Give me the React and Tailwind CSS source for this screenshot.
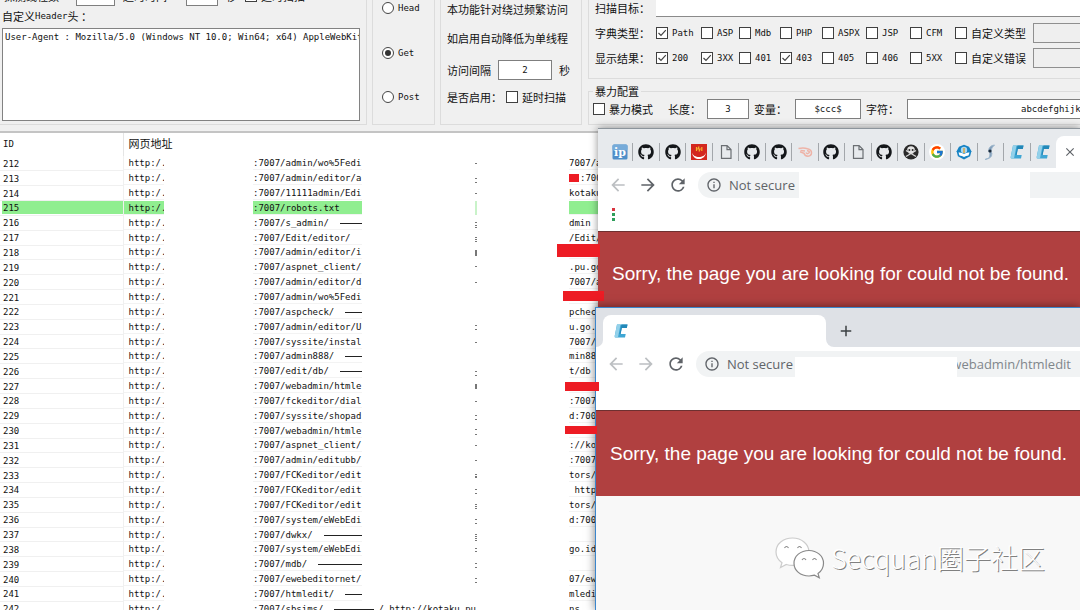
import React from "react";
import { FaGithub } from "react-icons/fa";
import { FcGoogle } from "react-icons/fc";
import { MdArrowBack, MdArrowForward, MdRefresh, MdOutlineInfo, MdClose, MdAdd } from "react-icons/md";

const MONO = "font-['DejaVu_Sans_Mono','Noto_Sans_CJK_SC',monospace] text-[9px]";

// [id, path, rule after path, residue pixels, right fragment]
const ROWS = [
  [212, ":7007/admin/wo%5Fedi", false, [7], "7007/a"],
  [213, ":7007/admin/editor/a", false, [7, 11], "", ":700"],
  [214, ":7007/11111admin/Edi", false, [7], "kotaku"],
  [215, ":7007/robots.txt", false, [], ""],
  [216, ":7007/s_admin/", true, [6, 9, 11], "dmin"],
  [217, ":7007/Edit/editor/", false, [6, 8, 10], "/Edit/"],
  [218, ":7007/admin/editor/i", false, [5, 6, 7, 8, 9, 10], ""],
  [219, ":7007/aspnet_client/", false, [6], ".pu.go"],
  [220, ":7007/admin/editor/d", false, [7], "7007/a"],
  [221, ":7007/admin/wo%5Fedi", false, [], ""],
  [222, ":7007/aspcheck/", true, [], "pcheck"],
  [223, ":7007/admin/editor/U", false, [5, 9], "u.go."],
  [224, ":7007/syssite/instal", false, [7], "7007/"],
  [225, ":7007/admin888/", true, [], "min88"],
  [226, ":7007/edit/db/", true, [7, 11], "t/db"],
  [227, ":7007/webadmin/htmle", false, [5, 6, 7, 8, 9], ""],
  [228, ":7007/fckeditor/dial", false, [7], ":7007"],
  [229, ":7007/syssite/shopad", false, [6, 10], "d:700"],
  [230, ":7007/webadmin/htmle", false, [5, 10], ""],
  [231, ":7007/aspnet_client/", false, [7], "://ko"],
  [232, ":7007/admin/editubb/", false, [7], ":7007"],
  [233, ":7007/FCKeditor/edit", false, [6, 8, 9], "tors/"],
  [234, ":7007/FCKeditor/edit", false, [6, 10], " http"],
  [235, ":7007/FCKeditor/edit", false, [6, 8, 10], "tors/"],
  [236, ":7007/system/eWebEdi", false, [6, 10], "d:700"],
  [237, ":7007/dwkx/", true, [6, 8, 10, 12], ""],
  [238, ":7007/system/eWebEdi", false, [6, 9], "go.id"],
  [239, ":7007/mdb/", true, [6, 10], ""],
  [240, ":7007/ewebeditornet/", false, [6, 10], "07/ew"],
  [241, ":7007/htmledit/", true, [], "mledi"],
  [242, ":7007/sbsims/", true, [], "ns"],
];

function Box({ id, checked, label }) {
  return (
    <span className="flex items-center gap-1 whitespace-nowrap">
      <span className="relative flex h-3 w-3 shrink-0">
        <input
          id={id}
          type="checkbox"
          defaultChecked={checked}
          className="peer h-3 w-3 appearance-none border border-[#404040] bg-white"
        />
        <svg
          viewBox="0 0 12 12"
          className="pointer-events-none absolute inset-0 hidden h-3 w-3 peer-checked:block"
          fill="none"
          stroke="#444"
          strokeWidth="1.2"
        >
          <path d="M2.5 6 L5 8.5 L9.8 3.2" />
        </svg>
      </span>
      <label htmlFor={id}>{label}</label>
    </span>
  );
}

function RadioItem({ id, checked, label }) {
  return (
    <span className="flex h-4 items-center gap-1">
      <span className="relative flex h-3 w-3 shrink-0">
        <input
          id={id}
          name="method"
          type="radio"
          defaultChecked={checked}
          className="peer h-3 w-3 appearance-none rounded-full border border-[#444] bg-white"
        />
        <span className="pointer-events-none absolute inset-[3px] hidden rounded-full bg-[#333] peer-checked:block" />
      </span>
      <label htmlFor={id} className={MONO}>
        {label}
      </label>
    </span>
  );
}

const FIELD = "border border-[#7f7f7f] bg-white text-center";

function TopLeft() {
  return (
    <div className="w-[367px] shrink-0 border-r border-b border-[#dcdcdc] pl-[2px]">
      <div className="-mt-[14px] flex h-5 items-center whitespace-nowrap">
        <label htmlFor="threads" className="w-[74px] pl-[2px]">探测线程数</label>
        <input id="threads" className={"h-5 w-[39px] " + FIELD} />
        <label htmlFor="timeout" className="w-[71px] pl-2">超时时间</label>
        <input id="timeout" className={"h-5 w-8 " + FIELD} />
        <span className="w-[27px] pl-2">秒</span>
        <Box id="follow" label="延时扫描" />
      </div>
      <label htmlFor="headers" className="flex h-5 items-center">
        自定义<span className={MONO}>Header</span>头 ：
      </label>
      <textarea
        id="headers"
        wrap="off"
        defaultValue="User-Agent : Mozilla/5.0 (Windows NT 10.0; Win64; x64) AppleWebKit/537.36"
        className={"mt-[2px] block h-[93px] w-[358px] resize-none overflow-hidden border border-[#828282] bg-white px-[2px] pt-[2px] leading-3 " + MONO}
      />
    </div>
  );
}

function DelayGroup() {
  return (
    <div className="ml-[5px] w-[142px] shrink-0 border-x border-b border-[#dcdcdc] pl-[6px]">
      <p className="flex h-[18px] items-center">本功能针对绕过频繁访问</p>
      <p className="flex h-10 items-center">如启用自动降低为单线程</p>
      <div className="flex h-6 items-center">
        <label htmlFor="gap" className="w-[51px]">访问间隔</label>
        <input id="gap" defaultValue="2" className={"h-5 w-[54px] " + MONO + " " + FIELD} />
        <span className="pl-[7px]">秒</span>
      </div>
      <div className="flex h-[30px] items-center">
        <span className="w-[59px]">是否启用：</span>
        <Box id="delay" label="延时扫描" />
      </div>
    </div>
  );
}

const TYPES = [["Path", 1], ["ASP"], ["Mdb"], ["PHP"], ["ASPX"], ["JSP"], ["CFM"]];
const CODES = [["200", 1], ["3XX", 1], ["401"], ["403", 1], ["405"], ["406"], ["5XX"]];
const COLS = "grid h-[25px] grid-cols-[61px_45px_38px_41px_42px_44px_44px_45px_78px_minmax(0,1fr)] items-center";

function OptionRow({ title, items, custom, id }) {
  return (
    <div className={COLS}>
      <span>{title}</span>
      {items.map(([t, c]) => (
        <span key={t} className={MONO}>
          <Box id={id + t} label={t} checked={!!c} />
        </span>
      ))}
      <Box id={id + "custom"} label={custom} />
      <input aria-label={custom} disabled className="h-5 w-full border border-r-0 border-[#8f8f8f] bg-[#efefef]" />
    </div>
  );
}

function RightGroups() {
  return (
    <div className="ml-[6px] min-w-0 flex-1">
      <div className="h-[79px] border-b border-l border-[#dcdcdc] pl-[6px]">
        <div className="flex h-5 items-start">
          <label htmlFor="target" className="w-[61px]">扫描目标：</label>
          <input id="target" className="h-[17px] flex-1 border-b border-[#8a8a8a] bg-white" />
        </div>
        <OptionRow title="字典类型：" items={TYPES} custom="自定义类型" id="t" />
        <OptionRow title="显示结果：" items={CODES} custom="自定义错误" id="c" />
      </div>
      <fieldset className="mt-1 h-[42px] border-b border-l border-t border-[#dcdcdc] pl-1">
        <legend className="px-[2px] leading-4">暴力配置</legend>
        <div className="flex h-5 items-center whitespace-nowrap">
          <span className="w-[75px]"><Box id="brute" label="暴力模式" /></span>
          <label htmlFor="len" className="w-[39px]">长度：</label>
          <input id="len" defaultValue="3" className={"h-5 w-[42px] " + MONO + " " + FIELD} />
          <label htmlFor="var" className="w-[46px] pl-[5px]">变量：</label>
          <input id="var" defaultValue="$ccc$" className={"h-5 w-[66px] " + MONO + " " + FIELD} />
          <label htmlFor="chars" className="w-[46px] pl-[5px]">字符：</label>
          <input
            id="chars"
            defaultValue="abcdefghijklmnopqrstuvwxyz"
            className={"h-5 min-w-0 flex-1 border border-r-0 border-[#7f7f7f] bg-white pl-[113px] " + MONO}
          />
        </div>
      </fieldset>
    </div>
  );
}

function Results() {
  return (
    <table className={"h-[484px] w-full table-fixed border-collapse leading-[11px] whitespace-pre " + MONO}>
      <colgroup>
        <col className="w-[123px]" />
        <col className="w-[130px]" />
        <col className="w-[222px]" />
        <col className="w-[94px]" />
        <col />
      </colgroup>
      <thead>
        <tr className="h-[23px] text-left">
          <th className="border-r border-[#e5e5e5] p-0 pl-[3px] font-normal">ID</th>
          <th colSpan={4} className="p-0 pl-[5px] text-[11px] font-normal">网页地址</th>
        </tr>
      </thead>
      <tbody>
        {ROWS.map(([id, path, rule, marks, frag, late]) => {
          const hit = id === 215;
          const tone = hit ? "bg-[#90ee90] " : "";
          return (
            <tr key={id}>
              <td className="border-r border-b border-[#f0f0f0] p-0 pl-[2px]">
                <div className={tone + "pt-[2px] pl-px"}>{id}</div>
              </td>
              <td className="p-0">
                <div className={tone + "w-10 overflow-hidden border-b border-[#f3f3f3] pt-[2px] pl-[5px]"}>http:/.</div>
              </td>
              <td className="p-0">
                <div className={tone + "flex items-center border-b border-[#f3f3f3] pt-[2px] " + (id === 242 ? "w-[223px]" : "w-[109px] overflow-hidden")}>
                  {path}
                  {rule && <span className={"ml-[11px] h-px bg-[#222] " + (id === 242 ? "w-[44px]" : "flex-1")} />}
                  {id === 242 && <span className="pl-1">/ http://kotaku.pu</span>}
                </div>
              </td>
              <td className="p-0">
                <svg width="2" height="14" className="block">
                  {hit && <rect width="2" height="14" fill="#c9f3c9" />}
                  {marks.map((y) => (
                    <rect key={y} y={y} width="2" height="1" fill="#777" />
                  ))}
                </svg>
              </td>
              <td className="p-0">
                <div className={tone + "h-[14px] w-[31px] overflow-hidden border-b border-[#f3f3f3] pt-[2px]"}>
                  {late ? <span className="pl-[11px]">{late}</span> : frag}
                </div>
              </td>
            </tr>
          );
        })}
      </tbody>
    </table>
  );
}

function PageGlyph() {
  return (
    <svg viewBox="0 0 16 16" className="h-4 w-4" fill="none" stroke="#6b6f73" strokeWidth="1.2">
      <path d="M3.5 1.6h5.6L13 5.5v8.9H3.5z M9 1.6v4h4" />
    </svg>
  );
}

function IpGlyph() {
  return (
    <svg viewBox="0 0 16 16" className="h-4 w-4">
      <rect x=".5" y=".5" width="15" height="15" rx="1.5" fill="#4f8fc9" />
      <rect x=".5" y=".5" width="15" height="6" rx="1.5" fill="#76abd9" />
      <text x="8" y="11.5" fontSize="11" fontWeight="bold" fontFamily="DejaVu Serif" textAnchor="middle" fill="#fff">ip</text>
    </svg>
  );
}

function RedGlyph() {
  return (
    <svg viewBox="0 0 16 16" className="h-4 w-4">
      <rect width="16" height="16" fill="#d3281f" />
      <path d="M1 8.500c1.500 6 12.500 6 14 0-1 8.500-13 9-14 0z" fill="#fff" />
      <path d="M5.500 3v4M8 2.500l-1 2.500h2l-1 2.500M10.800 3v4" stroke="#f6b52c" strokeWidth="1.200" fill="none" />
    </svg>
  );
}

function SwirlGlyph() {
  return (
    <svg viewBox="0 0 16 16" className="h-4 w-4" fill="none" stroke="#eeb3a7" strokeWidth="1.500">
      <path d="M1.500 4.500q5-1 9 .2 4 1 4 4t-3.500 3.500q-3.500 0-4-3l-4-1.500" />
      <path d="M3.500 6.500l4.500.5M9 8.500q1 2 2.800.5T10 6.500" />
    </svg>
  );
}

function SkullGlyph() {
  return (
    <svg viewBox="0 0 16 16" className="h-4 w-4">
      <circle cx="8" cy="8" r="7.600" fill="#2a2a2a" />
      <path d="M3 6.500l10 6M13 6.500l-10 6" stroke="#d8d8d8" strokeWidth="1.300" />
      <path d="M8 2.200c-2.500 0-3.800 1.500-3.800 3.400 0 1.200.7 2 1.500 2.400v1.600h4.600V8c.8-.4 1.500-1.200 1.500-2.400 0-1.900-1.300-3.400-3.800-3.400z" fill="#e4e4e4" />
      <circle cx="6.400" cy="5.900" r="1" fill="#2a2a2a" />
      <circle cx="9.600" cy="5.900" r="1" fill="#2a2a2a" />
    </svg>
  );
}

function CrestGlyph() {
  return (
    <svg viewBox="0 0 16 16" className="h-4 w-4">
      <path d="M8 .7l5 2 2.400 4.500-1.300 5L8 15.400l-6.100-3.200-1.300-5L3 2.700z" fill="#1683c4" />
      <circle cx="8" cy="6" r="3.200" fill="#a9d8f2" />
      <path d="M2.500 8.500q3-.5 5.500 1.500 2.500-2 5.500-1.500l-1 3q-2.500 0-4.500 1.500-2-1.500-4.500-1.500z" fill="#fff" />
      <path d="M8 4v5" stroke="#d9a441" strokeWidth="1.500" />
    </svg>
  );
}

function BoltGlyph() {
  return (
    <svg viewBox="0 0 16 16" className="h-4 w-4">
      <path d="M12.500 1Q7 1.500 6.500 7q2.500 2 .5 7l-4 1.500q5-.5 6.500-3.500 1-3-.5-4.500.2-4 3.500-6.500z" fill="#7f9cb8" stroke="#9fb7cc" />
      <circle cx="8" cy="7" r="1.600" fill="#1d2b3a" />
    </svg>
  );
}

function CGlyph() {
  return (
    <svg viewBox="0 0 16 16" className="h-4 w-4">
      <path d="M4 1.500h10.500L13.800 5H8.800L7.600 11h5.100L12 14.500H3Q1.300 14.500 1.700 13z" fill="#3fa6d4" />
      <path d="M4 1.500h3.500L5 14.500H3Q1.300 14.500 1.700 13z" fill="#93d1ea" />
      <path d="M8.500 1.500h6L13.800 5H8.800L7.600 11H6.500z" fill="#2388b8" />
    </svg>
  );
}

const Git = () => <FaGithub className="h-4 w-4 text-[#14171a]" />;
const Goo = () => (
  <span className="flex rounded-full bg-white p-px">
    <FcGoogle className="h-[14px] w-[14px]" />
  </span>
);
const TABS = [IpGlyph, Git, Git, RedGlyph, PageGlyph, Git, Git, SwirlGlyph, Git, PageGlyph, Git, SkullGlyph, Goo, CrestGlyph, BoltGlyph, CGlyph, CGlyph];

function NavButtons({ forward }) {
  return (
    <div className="flex w-[92px] shrink-0 items-center gap-[10px]">
      <button aria-label="Back"><MdArrowBack className="h-5 w-5 text-[#bcbfc2]" /></button>
      <button aria-label="Forward"><MdArrowForward className={"h-5 w-5 " + (forward ? "text-[#5f6368]" : "text-[#bcbfc2]")} /></button>
      <button aria-label="Reload"><MdRefresh className="h-5 w-5 text-[#5f6368]" /></button>
    </div>
  );
}

function Sorry({ className }) {
  return (
    <div className={"flex items-center overflow-hidden bg-[#b04040] font-['Liberation_Sans',sans-serif] text-[19px] whitespace-nowrap text-white " + className}>
      Sorry, the page you are looking for could not be found.
    </div>
  );
}

const URLTEXT = "font-['Open_Sans',sans-serif] text-[13px]";

function BackWindow() {
  return (
    <section className="absolute top-[128px] right-0 left-[598px] border-t border-[#8d959c] bg-white shadow-[0_0_8px_rgba(0,0,0,0.45)]">
      <div className="flex h-[39px] items-end bg-[#e7eaed] pl-[9px]">
        <ul className="flex h-8 flex-1 items-center">
          {TABS.map((Glyph, i) => (
            <li key={i} className={"flex h-[18px] flex-1 items-center justify-center " + (i < 16 ? "border-r border-[#a3a7ab]" : "")}>
              <Glyph />
            </li>
          ))}
        </ul>
        <button aria-label="Close tab" className="flex h-8 w-6 items-center justify-center rounded-tl-lg bg-white pl-1">
          <MdClose className="h-[14px] w-[14px] text-[#5f6368]" />
        </button>
      </div>
      <div className="flex h-[33px] items-center pl-[10px]">
        <NavButtons forward />
        <div className="ml-[-2px] flex h-[26px] flex-1 items-center">
          <div className={"flex h-full w-[101px] items-center gap-[7px] rounded-l-full bg-[#f1f3f4] pl-2 whitespace-nowrap text-[#5f6368] " + URLTEXT}>
            <MdOutlineInfo className="h-4 w-4 shrink-0" /> Not secure
          </div>
          <div className="ml-[231px] h-full flex-1 bg-[#f1f3f4]" />
        </div>
      </div>
      <div className="flex h-[30px] flex-col gap-[2px] pt-[7px] pl-[14px]">
        <span className="h-[3px] w-[3px] bg-[#d9333f]" />
        <span className="h-[3px] w-[3px] bg-[#2f9e5b]" />
        <span className="h-[3px] w-[3px] bg-[#2f9e5b]" />
      </div>
      <Sorry className="h-[85px] border-t border-[#6e3030] pl-[14px]" />
    </section>
  );
}

function FrontWindow() {
  return (
    <section className="absolute top-[307px] right-0 bottom-0 left-[595px] border-t border-l border-[#3b86cc] bg-[#f8f8f8] shadow-[0_0_9px_rgba(0,0,0,0.5)]">
      <div className="flex h-[39px] items-end bg-[#dee1e6]">
        <div className="h-full w-[7px] pt-[30px]">
          <div className="h-[9px] bg-white"><div className="h-full rounded-br-lg bg-[#dee1e6]" /></div>
        </div>
        <div className="flex h-8 w-[223px] items-center rounded-t-lg bg-white pl-[10px]">
          <CGlyph />
        </div>
        <div className="h-2 w-2 bg-white"><div className="h-full rounded-bl-lg bg-[#dee1e6]" /></div>
        <button aria-label="New tab" className="flex h-8 items-center pl-[3px]">
          <MdAdd className="h-[18px] w-[18px] text-[#3c4043]" />
        </button>
      </div>
      <div className="flex h-[33px] items-center bg-white pl-[10px]">
        <NavButtons />
        <div className={"ml-[-2px] flex h-[26px] flex-1 items-end overflow-hidden rounded-l-full bg-[#f1f3f4] whitespace-nowrap " + URLTEXT}>
          <div className="flex h-full w-[99px] items-center gap-[7px] pl-2 text-[#5f6368]">
            <MdOutlineInfo className="h-4 w-4 shrink-0" /> Not secure
          </div>
          <div className="h-5 w-[162px] bg-white" />
          <div className="flex h-full min-w-0 flex-1 items-center justify-end overflow-hidden pr-[9px] text-[#80868b]">
            webadmin/htmledit
          </div>
        </div>
      </div>
      <div className="h-[30px] bg-white" />
      <Sorry className="h-[86px] border-t border-[#6e3030] pl-[14px]" />
    </section>
  );
}

function Watermark() {
  return (
    <div className="absolute right-[35px] bottom-[30px] flex items-center gap-[6px] font-['Noto_Sans_CJK_SC',sans-serif] text-[27px] leading-[44px] font-light whitespace-nowrap text-white [text-shadow:1px_1px_0_#808080]">
      <svg width="50" height="44" viewBox="0 0 50 44" fill="#fff" stroke="#888" strokeWidth="1.200">
        <path d="M17.500 2C8 2 1 8 1 16c0 4.500 2.200 8 6 10.800L5.500 31.500l5.800-3c2 .6 4 .9 6.200.9C27 29.400 34 23.500 34 16S27 2 17.500 2z" stroke="#ccc" />
        <path d="M34 14.500c-8.500 0-15 5.500-15 12.800S25.500 40 34 40c2 0 3.800-.3 5.500-.8l4.800 2.600-1.300-4.200c3.500-2.500 5.500-6 5.500-10.300 0-7.300-6.500-12.800-14.500-12.800z" />
        <path d="M9.500 12q2-3 4 0M22.500 12q2-3 4 0M27 24q2-3 4 0M37.500 24q2-3 4 0" fill="none" />
      </svg>
      <span>Secquan圈子社区</span>
    </div>
  );
}

export default function App() {
  return (
    <main className="relative h-screen overflow-hidden bg-white font-['Noto_Sans_CJK_SC',sans-serif] text-[11px] leading-4 text-[#111]">
      <header className="h-[133px] border-b-2 border-[#c4c4c4] bg-[#f0f0f0]">
        <div className="flex h-[125px]">
          <TopLeft />
          <div className="ml-[5px] flex w-[63px] shrink-0 flex-col border-x border-b border-[#dcdcdc] pl-[9px]">
            <div className="flex h-[105px] flex-col justify-between">
              <RadioItem id="head" label="Head" />
              <RadioItem id="get" label="Get" checked />
              <RadioItem id="post" label="Post" />
            </div>
          </div>
          <DelayGroup />
          <RightGroups />
        </div>
      </header>
      <Results />
      <BackWindow />
      <span className="absolute top-[174px] left-[569px] h-2 w-[10px] bg-[#ed1c24]" />
      <span className="absolute top-[244px] left-[557px] h-[13px] w-[43px] bg-[#ed1c24]" />
      <span className="absolute top-[291px] left-[563px] h-[10px] w-[41px] bg-[#ed1c24]" />
      <FrontWindow />
      <span className="absolute top-[382px] left-[565px] h-[9px] w-[34px] bg-[#ed1c24]" />
      <span className="absolute top-[426px] left-[565px] h-[8px] w-[32px] bg-[#ed1c24]" />
      <Watermark />
    </main>
  );
}
